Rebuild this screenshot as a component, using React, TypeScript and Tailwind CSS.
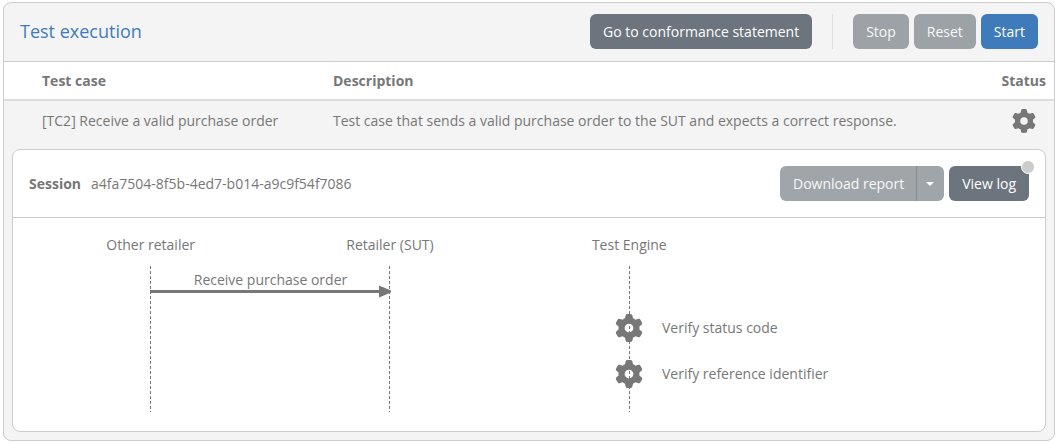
import { FaGear } from 'react-icons/fa6';

const actors = ['Other retailer', 'Retailer (SUT)', 'Test Engine'];
const steps = ['Verify status code', 'Verify reference identifier'];

const testCases = [
  {
    id: 'TC2',
    name: 'Receive a valid purchase order',
    description: 'Test case that sends a valid purchase order to the SUT and expects a correct response.',
  },
];

const button = 'h-[35px] rounded-md px-[13px]';

function SequenceDiagram() {
  return (
    <div className="overflow-x-auto px-[18px] pt-4 pb-[19px]">
      <div className="w-[718px]">
        <div className="grid grid-cols-3 pb-[11px] text-center">
          {actors.map((actor) => (
            <div key={actor}>{actor}</div>
          ))}
        </div>

        <div className="relative pt-[3px] pb-6">
          {/* Lifelines */}
          <div className="absolute inset-0 grid grid-cols-3">
            {actors.map((actor) => (
              <div key={actor} className="flex justify-center">
                <div className="w-px bg-[repeating-linear-gradient(to_bottom,#777_0_3px,transparent_3px_5px)]" />
              </div>
            ))}
          </div>

          {/* Message between the first two actors */}
          <div className="relative ml-[119px] w-[241px]">
            <div className="text-center">Receive purchase order</div>
            <svg className="-mt-[5px] block h-[13px] w-full" viewBox="0 0 241 13" fill="#777">
              <rect x="0" y="5" width="239" height="3" />
              <path d="M229 0.5L241 5.5V7.5L229 12.5Z" />
            </svg>
          </div>

          {/* Verification steps */}
          <ul className="relative mt-4 ml-[584px] space-y-[18px]">
            {steps.map((step) => (
              <li key={step} className="flex h-7 items-center gap-[19px] whitespace-nowrap">
                <FaGear className="size-7 shrink-0" />
                <span className="pb-px">{step}</span>
              </li>
            ))}
          </ul>
        </div>
      </div>
    </div>
  );
}

function SessionPanel({ session }: { session: string }) {
  return (
    <div className="mx-2 mt-2 mb-2 rounded-lg border border-[#ccc] bg-white">
      <div className="flex items-center justify-between border-b border-[#ccc] p-4">
        <div className="flex gap-[10px]">
          <span className="font-bold">Session</span>
          <span>{session}</span>
        </div>
        <div className="flex gap-[5px]">
          <div className="flex">
            <button disabled className="h-[35px] rounded-l-md bg-[#a0a5a9] pr-3 pl-[13px] text-[#f8f8f8]">
              Download report
            </button>
            <button
              disabled
              aria-label="More report formats"
              className="flex h-[35px] w-7 items-center justify-center rounded-r-md border-l border-[#868c92] bg-[#a0a5a9] pr-px"
            >
              <svg className="h-1 w-2" viewBox="0 0 8 4" fill="#fff">
                <path d="M0 0H8L4 4Z" />
              </svg>
            </button>
          </div>
          <button className={`${button} relative bg-[#6c757d] text-white`}>
            View log
            <span className="absolute -top-[6px] -right-[6px] size-[14px] rounded-full border border-white bg-[#ccc]" />
          </button>
        </div>
      </div>
      <SequenceDiagram />
    </div>
  );
}

export default function App() {
  return (
    <div className="pt-[2px] pr-[2px] pb-[2px] pl-[3px] font-['Open_Sans',sans-serif] text-[14px] leading-[21px] text-[#777]">
      <div className="overflow-hidden rounded-lg border border-[#ccc] bg-[#f4f4f4]">
        {/* Header */}
        <div className="flex items-center justify-between border-b border-[#ccc] px-4 pt-[11px] pb-3">
          <h1 className="text-[18px] text-[#3f7bba]">Test execution</h1>
          <div className="flex gap-[5px]">
            <button className={`${button} bg-[#6c757d] text-white`}>Go to conformance statement</button>
            <div className="mx-[15px] w-px bg-[#ddd]" />
            <button disabled className={`${button} bg-[#9da2a6] text-[#f8f8f8]`}>
              Stop
            </button>
            <button disabled className={`${button} bg-[#9da2a6] text-[#f8f8f8]`}>
              Reset
            </button>
            <button className={`${button} bg-[#3f7bba] text-white`}>Start</button>
          </div>
        </div>

        {/* Test cases */}
        <table className="w-full border-collapse text-left">
          <thead className="bg-white">
            <tr className="border-b-2 border-[#ddd]">
              <th className="w-[329px] py-2 pl-[38px] font-bold">Test case</th>
              <th className="py-2 font-bold">Description</th>
              <th className="w-[60px] py-2 pr-2 text-right font-bold">Status</th>
            </tr>
          </thead>
          <tbody>
            {testCases.map((testCase) => (
              <tr key={testCase.id}>
                <td className="pt-[7px] pb-[9px] pl-[38px]">
                  [{testCase.id}] {testCase.name}
                </td>
                <td className="pt-[7px] pb-[9px]">{testCase.description}</td>
                <td className="py-2 pr-[18px]">
                  <FaGear className="ml-auto size-6" />
                </td>
              </tr>
            ))}
          </tbody>
        </table>

        <SessionPanel session="a4fa7504-8f5b-4ed7-b014-a9c9f54f7086" />
      </div>
    </div>
  );
}
